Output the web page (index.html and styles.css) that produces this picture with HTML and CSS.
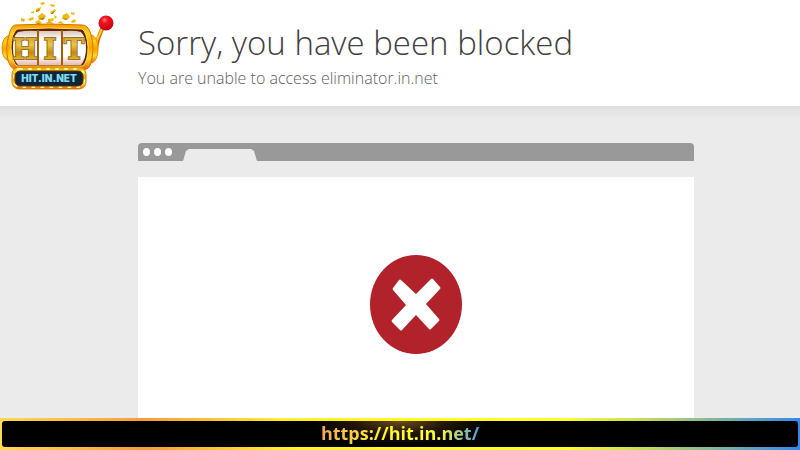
FILE: index.html
```html
<!DOCTYPE html>
<html lang="en">
<head>
<meta charset="utf-8">
<meta name="viewport" content="width=device-width, initial-scale=1">
<title>Sorry, you have been blocked</title>
<link rel="stylesheet" href="styles.css">
</head>
<body>
<header class="header">
  <svg class="logo" viewBox="0 0 120 96" role="img" aria-label="HIT.IN.NET">
    <defs>
      <linearGradient id="frame" x1="0" y1="0" x2="0" y2="1">
        <stop offset="0" stop-color="#f39a08"/><stop offset=".2" stop-color="#ffd21c"/><stop offset=".5" stop-color="#f5a500"/><stop offset=".75" stop-color="#ffd92e"/><stop offset="1" stop-color="#e85a08"/>
      </linearGradient>
      <linearGradient id="gold" x1="0" y1="0" x2="0" y2="1">
        <stop offset="0" stop-color="#c4982a"/><stop offset=".35" stop-color="#edc544"/><stop offset=".6" stop-color="#c28a10"/><stop offset="1" stop-color="#ffd83a"/>
      </linearGradient>
      <linearGradient id="reel" x1="0" y1="0" x2="0" y2="1">
        <stop offset="0" stop-color="#d9c3b6"/><stop offset=".25" stop-color="#fff"/><stop offset=".75" stop-color="#fff"/><stop offset="1" stop-color="#e6b9b0"/>
      </linearGradient>
      <radialGradient id="knob" cx=".4" cy=".3" r=".7">
        <stop offset="0" stop-color="#ff7777"/><stop offset=".3" stop-color="#f01420"/><stop offset="1" stop-color="#c80010"/>
      </radialGradient>
    </defs>
    <g fill="#efb80b">
      <path d="M40 3l4-1 1 2-3 1zM51 4l4 1-1 2-4-1zM36 9l5-2-1 4-4 1zM50 12l5-3 1 2-4 3zM31 12l3-1v2h-3zM21 18l4 1-1 3-3-1zM28 19l5-2 1 2-4 2zM38 16l4-3 4 3-2 3-5 1zM48 19l6-1-1 3-5 1zM54 15l3 2-2 2zM63 15l4-2 3 4-3 3-5-1zM71 12l4 1-1 2-3-1zM71 21l4-2 1 3-4 1zM35 22l4-2 3 3-4 2zM45 23l5-2 4 3zM57 23l4-2 3 3z"/>
      <path fill="#b77b00" d="M36 11l4-2-1 2-3 1zM50 14l5-3-2 3zM39 19l6-2-2 3zM63 18l5 1-3 1zM35 24l4-1 1 2z"/>
    </g>
    <path d="M94 58L98 39 104 24" fill="none" stroke="#d66a00" stroke-width="4"/>
    <path d="M92 58L97 40 104 24" fill="none" stroke="#ffd326" stroke-width="2"/>
    <circle cx="106" cy="23" r="7.500" fill="url(#knob)"/>
    <path d="M10 35Q2 37 2 48Q2 59 9 61H20V35zM85 35h7q6 3 6 14t-6 14H84z" fill="url(#frame)" stroke="#e89200"/>
    <path d="M15 25Q48 23 83 25Q89 26 91 35Q95 48 91 62Q90 70 82 70H17Q10 69 8 60Q5 47 9 35Q11 26 15 25z" fill="url(#frame)" stroke="#df7100"/>
    <path d="M17 29Q48 27 82 29Q87 32 88 47Q88 61 83 66H17Q12 62 11 48Q11 34 17 29z" fill="#642009" stroke="#ffe14c"/>
    <path d="M18 32Q28 30 37 31V65H18Q13 60 13 48T18 32zM39 31H61V65H39zM63 31Q75 30 81 32Q86 37 86 48T81 65H63z" fill="url(#reel)"/>
    <path d="M38 30V66M62 30V66" stroke="#e59c09" stroke-width="1"/>
    <g class="reel-text" fill="url(#gold)" stroke="#96722a" stroke-width="2" paint-order="stroke">
      <text x="25" y="59" text-anchor="middle">H</text><text x="50" y="59" text-anchor="middle">I</text><text x="74" y="59" text-anchor="middle">T</text>
    </g>
    <rect x="12" y="67" width="74" height="22" rx="7" fill="url(#frame)" stroke="#d98500"/>
    <rect x="14" y="69" width="70" height="18" rx="6" fill="none" stroke="#fff5a0" stroke-width="2" stroke-dasharray="2 7" stroke-linecap="round"/>
    <rect x="15" y="71" width="68" height="15" rx="5" fill="#102536" stroke="#603000"/>
    <text class="logo-domain" x="49" y="82" text-anchor="middle">HIT.IN.NET</text>
  </svg>
  <div class="heading">
    <h1>Sorry, you have been blocked</h1>
    <p>You are unable to access eliminator.in.net</p>
  </div>
</header>
<main class="main">
  <div class="browser">
    <div class="browser-bar">
      <span class="dot"></span><span class="dot"></span><span class="dot"></span>
      <span class="tab"></span>
    </div>
    <div class="browser-page">
      <svg class="error-icon" viewBox="0 0 92 99" role="img" aria-label="Blocked">
        <ellipse cx="46" cy="49.500" rx="46" ry="49.500" fill="#b2222a"/>
        <path d="M31 25L46 39 61 24Q62 23 63 24L70 32Q71 33 70 34L56 49 69 64Q70 65 69 66L61 74Q60 75 59 74L46 60 32 75Q31 76 30 75L22 67Q21 66 22 65L36 50 23 35Q22 34 23 33L29 25Q30 24 31 25z" fill="#fff"/>
      </svg>
    </div>
  </div>
</main>
<footer class="footer">
  <div class="footer-inner"><a href="https://hit.in.net/">https://hit.in.net/</a></div>
</footer>
</body>
</html>
```
FILE: styles.css
```css
* {
  box-sizing: border-box;
}

body {
  display: flex;
  flex-direction: column;
  min-height: 100vh;
  margin: 0;
  background: #ebebeb;
  font-family: "Open Sans", "Noto Sans", sans-serif;
}

.header {
  display: grid;
  grid-template-columns: 17.25% 1fr;
  background: #fff;
}

.logo {
  width: 120px;
  height: 96px;
}

.reel-text {
  font: 900 27px "DejaVu Serif", serif;
}

.logo-domain {
  fill: #7bdcf5;
  font: 900 10px Inter, sans-serif;
}

.heading {
  padding: 20px 0 16px;
}

h1,
p {
  margin: 0;
  font-weight: 300;
}

h1 {
  color: #404040;
  font-size: 33px;
  line-height: 46px;
}

p {
  color: #606060;
  font-size: 16px;
  line-height: 24px;
}

.main {
  display: flex;
  flex: 1;
  padding: 37px 13.25% 0 17.25%;
  background: linear-gradient(#dedede, #ebebeb 12px);
}

.browser {
  display: flex;
  flex: 1;
  flex-direction: column;
  gap: 16px;
}

.browser-bar {
  display: flex;
  align-items: center;
  gap: 4px;
  height: 18px;
  padding-left: 5px;
  border-radius: 4px 4px 0 0;
  background: #999;
}

.dot {
  width: 7px;
  height: 8px;
  border-radius: 50%;
  background: #fff;
}

.tab {
  align-self: flex-end;
  width: 74px;
  height: 12px;
  margin-left: 7px;
  background: #ebebeb;
  clip-path: polygon(0 100%, 3px 2px, 6px 0, 68px 0, 71px 2px, 100% 100%);
}

.browser-page {
  flex: 1;
  padding: 78px 0 64px;
  background: #fff;
}

.error-icon {
  display: block;
  width: 92px;
  height: 99px;
  margin: 0 auto;
}

.footer {
  padding: 3px 2px;
  background: linear-gradient(90deg, #ffdc50, #f79a3c 18%, #fff02a 36%, #ffff28 70%, #c9dc58 80%, #3289ed);
}

.footer-inner {
  height: 26px;
  border-radius: 3px;
  background: radial-gradient(ellipse 90px 24px at 50% 0, #6b4d1c, #241605 50%, #000);
  text-align: center;
}

.footer a {
  display: inline-block;
  background: linear-gradient(90deg, #f5a65a, #fff52e 38%, #ffff32 75%, #4d9be0);
  background-clip: text;
  color: transparent;
  font-size: 18px;
  font-weight: 700;
  line-height: 24px;
  text-decoration: none;
}
```
